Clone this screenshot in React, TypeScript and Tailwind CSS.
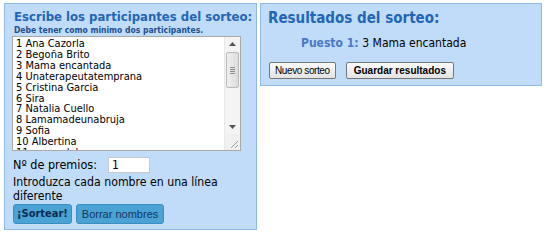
import React from "react";

const names = [
  "1 Ana Cazorla",
  "2 Begoña Brito",
  "3 Mama encantada",
  "4 Unaterapeutatemprana",
  "5 Cristina Garcia",
  "6 Sira",
  "7 Natalia Cuello",
  "8 Lamamadeunabruja",
  "9 Sofia",
  "10 Albertina",
  "11 mamadeleo",
];

function ScrollBar() {
  return (
    <div className="flex w-[16px] flex-col bg-[#f4f4f4] border-l border-[#e8e8e8]">
      <div className="flex h-[14px] items-center justify-center">
        <svg width="7" height="4" viewBox="0 0 7 4">
          <path d="M0 4 L3.5 0 L7 4 Z" fill="#555" />
        </svg>
      </div>
      <div className="mx-[1px] mt-[1px] flex h-[36px] items-center justify-center rounded-[2px] border border-[#b9b9b9] bg-gradient-to-r from-[#f0f0f0] to-[#dcdcdc]">
        <div className="flex flex-col gap-[1px]">
          <div className="h-px w-[5px] bg-[#8a8a8a]" />
          <div className="h-px w-[5px] bg-[#8a8a8a]" />
          <div className="h-px w-[5px] bg-[#8a8a8a]" />
          <div className="h-px w-[5px] bg-[#8a8a8a]" />
        </div>
      </div>
      <div className="flex-1" />
      <div className="flex h-[14px] items-center justify-center">
        <svg width="7" height="4" viewBox="0 0 7 4">
          <path d="M0 0 L3.5 4 L7 0 Z" fill="#555" />
        </svg>
      </div>
      <div className="flex h-[16px] items-end justify-end bg-[#f0f0f0] p-[2px]">
        <svg width="8" height="8" viewBox="0 0 8 8">
          <path d="M8 1 L1 8 M8 5 L5 8" stroke="#9a9a9a" strokeWidth="1" />
        </svg>
      </div>
    </div>
  );
}

export default function App() {
  const font = "font-['DejaVu_Sans_Condensed','DejaVu_Sans',sans-serif]";
  return (
    <div className={`flex items-start bg-white pl-[4px] pt-[3px] w-[550px] h-[238px] ${font}`}>
      <div className="flex h-[227px] w-[253px] flex-col border border-[#8fbbe6] bg-[#c0dcf8] pl-[7px] pt-[5px]">
        <div className="pl-[2px] text-[13px] font-bold leading-[15px] text-[#2366b5]">
          Escribe los participantes del sorteo:
        </div>
        <div className="mt-[1px] pl-[2px] text-[8.5px] font-bold leading-[11px] text-[#1f4f8e]">
          Debe tener como minimo dos participantes.
        </div>
        <div className="flex h-[115px] w-[229px] border border-[#a9a9a9] bg-white">
          <div className="flex-1 overflow-hidden pl-[3px] pt-[2px] text-[11px] leading-[10.9px] text-black">
            {names.map((n) => (
              <div key={n} className="whitespace-nowrap">{n}</div>
            ))}
          </div>
          <ScrollBar />
        </div>
        <div className="mt-[6px] flex items-center pl-[1px] text-[12.5px] leading-[16px] text-black">
          <span className="w-[95px]">Nº de premios:</span>
          <div className="flex h-[16px] w-[42px] items-center border border-[#c8c8c8] bg-white pl-[3px] text-[12px]">
            1
          </div>
        </div>
        <div className="mt-[2px] pl-[1px] pr-[4px] text-[12.2px] leading-[14px] text-black">
          Introduzca cada nombre en una línea diferente
        </div>
        <div className="mt-[1px] flex gap-[4px] pl-[1px]">
          <button className="h-[20px] rounded-[3px] border border-[#3a8fc0] bg-[#4aa3d4] px-[3px] text-[11px] font-bold leading-[18px] text-[#0b2c52]">
            ¡Sortear!
          </button>
          <button className="h-[20px] rounded-[3px] border border-[#3a8fc0] bg-[#4aa3d4] px-[5px] font-['Liberation_Sans',sans-serif] text-[11px] leading-[18px] text-[#15355f]">
            Borrar nombres
          </button>
        </div>
      </div>
      <div className="ml-[3px] flex h-[83px] w-[282px] flex-col border border-[#8fbbe6] bg-[#c0dcf8] pl-[7px] pt-[5px]">
        <div className="text-[15px] font-bold leading-[18px] text-[#2366b5]">
          Resultados del sorteo:
        </div>
        <div className="mt-[9px] pl-[33px] text-[12px] leading-[14px]">
          <span className="font-bold text-[#4a78c4]">Puesto 1: </span>
          <span className="text-black">3 Mama encantada</span>
        </div>
        <div className="mt-[12px] flex gap-[10px] pl-[1px]">
          <button className="h-[17px] rounded-[2px] border border-[#767676] bg-gradient-to-b from-[#fbfbfb] to-[#e3e3e3] px-[5px] font-['Liberation_Sans',sans-serif] text-[10px] tracking-[-0.4px] leading-[15px] text-black">
            Nuevo sorteo
          </button>
          <button className="h-[17px] rounded-[2px] border border-[#767676] bg-gradient-to-b from-[#fbfbfb] to-[#e3e3e3] px-[7px] font-['Liberation_Sans',sans-serif] text-[10px] font-bold leading-[15px] text-black">
            Guardar resultados
          </button>
        </div>
      </div>
    </div>
  );
}
